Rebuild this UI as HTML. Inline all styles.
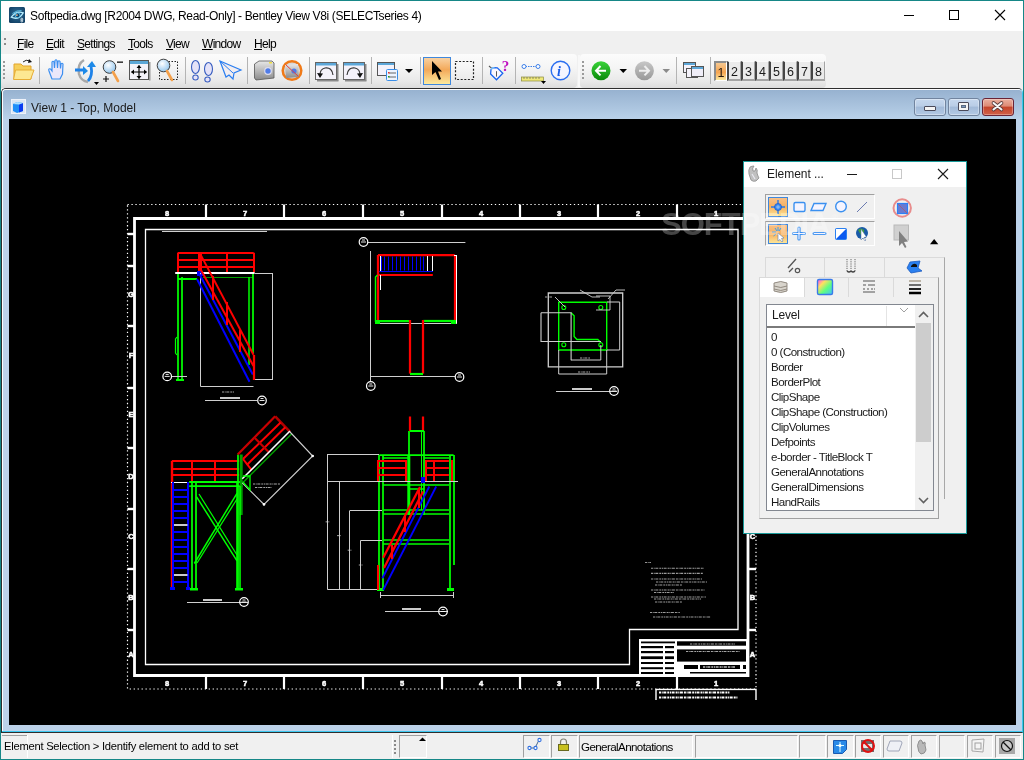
<!DOCTYPE html>
<html><head><meta charset="utf-8">
<style>
*{margin:0;padding:0;box-sizing:border-box}
html,body{width:1024px;height:760px;overflow:hidden;background:#f0f0f0;font-family:"Liberation Sans",sans-serif;position:relative}
.a{position:absolute}
#tb{left:0;top:0;width:1024px;height:31px;background:#fff;border-top:1px solid #168787;border-left:1px solid #168787;border-right:1px solid #168787}
#ttl{left:30px;top:9px;font-size:12px;letter-spacing:-0.36px;color:#000;white-space:nowrap}
#menu{left:1px;top:31px;width:1022px;height:23px;background:#f0f0f0}
.mi{position:absolute;top:37px;font-size:12px;letter-spacing:-0.7px;color:#000;white-space:nowrap}
.mi u{text-decoration:underline}
.band{position:absolute;top:54px;height:34px;border-radius:0 4px 4px 0;background:linear-gradient(#fcfcfc,#f5f5f5 40%,#e9e9e9 80%,#dcdcdc)}
.sep{position:absolute;top:57px;width:1px;height:27px;background:#c4c4c4;box-shadow:1px 0 0 #fff}
#mdi{left:1px;top:88px;width:1022px;height:645px;background:#bfd4ec;border:1px solid #2a2a2a;border-radius:5px 5px 0 0}
#mdititle{left:2px;top:89px;width:1020px;height:30px;background:linear-gradient(#99b3d2,#b3cbe6);border-radius:4px 4px 0 0;border-top:1px solid #fff;border-left:1px solid #fff}
#vp{left:9px;top:119px;width:1007px;height:606px;background:#000;overflow:hidden}
.sp{position:absolute;top:735px;height:23px;border-top:1px solid #a0a0a0;border-left:1px solid #a0a0a0;border-right:1px solid #fff;border-bottom:1px solid #fff}
#dlg{left:743px;top:161px;width:224px;height:373px;background:#f0f0f0;border:1px solid #1a8a8a}
</style></head><body>
<!-- window border -->
<div class="a" style="left:0;top:0;width:1px;height:760px;background:#168787"></div>
<div class="a" style="left:1023px;top:0;width:1px;height:760px;background:#168787"></div>
<div class="a" style="left:0;top:759px;width:1024px;height:1px;background:#168787"></div>
<div id="tb" class="a"></div>
<div id="ttl" class="a">Softpedia.dwg [R2004 DWG, Read-Only] - Bentley View V8i (SELECTseries 4)</div>

<div id="menu" class="a"></div>

<!-- title bar content -->
<svg class="a" style="left:9px;top:7px" width="16" height="16" viewBox="0 0 16 16">
<defs><radialGradient id="eyeg" cx="50%" cy="45%" r="65%"><stop offset="0" stop-color="#2f6f9a"/><stop offset="1" stop-color="#103e62"/></radialGradient></defs>
<rect x="0" y="0" width="16" height="16" rx="1.5" fill="url(#eyeg)"/>
<path d="M2.3 10.2 Q7.5 3.2 14.2 5.8 Q9.5 13.6 2.3 10.2Z" fill="#1a5580" stroke="#b6ecfc" stroke-width="1.3"/>
<path d="M3.5 6.5 Q8 3 12.5 3.6" fill="none" stroke="#60c8f0" stroke-width="0.9"/>
<circle cx="8.6" cy="8.3" r="2.4" fill="#0d3d66" stroke="#5cc4ec" stroke-width="0.9"/>
<circle cx="7.9" cy="8.1" r="0.9" fill="#f4c090"/>
<circle cx="12.8" cy="12.2" r="1" fill="none" stroke="#e8f4fa" stroke-width="0.8"/><circle cx="12.8" cy="14" r="1" fill="none" stroke="#e8f4fa" stroke-width="0.8"/>
</svg>
<svg class="a" style="left:890px;top:0" width="133" height="31">
<line x1="904" y1="15.5" x2="914" y2="15.5" stroke="#000" stroke-width="1" transform="translate(-890,0)"/>
<rect x="59.5" y="10.5" width="9" height="9" fill="none" stroke="#000" stroke-width="1"/>
<path d="M105 10 L115 20 M115 10 L105 20" stroke="#000" stroke-width="1.1"/>
</svg>

<!-- menu -->
<div class="a" style="left:4px;top:38px;width:2px;height:2px;background:#8a8a8a"></div>
<div class="a" style="left:4px;top:43px;width:2px;height:2px;background:#8a8a8a"></div>
<div class="mi" style="left:17px"><u>F</u>ile</div>
<div class="mi" style="left:46px"><u>E</u>dit</div>
<div class="mi" style="left:77px"><u>S</u>ettings</div>
<div class="mi" style="left:128px"><u>T</u>ools</div>
<div class="mi" style="left:166px"><u>V</u>iew</div>
<div class="mi" style="left:202px"><u>W</u>indow</div>
<div class="mi" style="left:254px"><u>H</u>elp</div>

<!-- toolbars -->
<div class="band" style="left:1px;width:576px"></div>
<div class="band" style="left:580px;width:246px;border-radius:4px"></div><div class="a" style="left:578px;top:55px;width:2px;height:32px;background:#f8f8f8"></div>
<svg class="a" style="left:0;top:54px" width="1024" height="34" viewBox="0 54 1024 34">
<defs>
<linearGradient id="selg" x1="0" y1="0" x2="0" y2="1"><stop offset="0" stop-color="#f9d3a4"/><stop offset="0.45" stop-color="#f3a95a"/><stop offset="1" stop-color="#fdeb9e"/></linearGradient>
<radialGradient id="mag" cx="40%" cy="35%" r="70%"><stop offset="0" stop-color="#ffffff"/><stop offset="1" stop-color="#8fc4ee"/></radialGradient>
<linearGradient id="grn" x1="0" y1="0" x2="0" y2="1"><stop offset="0" stop-color="#3ad43a"/><stop offset="1" stop-color="#0a8a0a"/></linearGradient>
<linearGradient id="gry" x1="0" y1="0" x2="0" y2="1"><stop offset="0" stop-color="#c8c8c8"/><stop offset="1" stop-color="#989898"/></linearGradient>
<linearGradient id="cam" x1="0" y1="0" x2="0" y2="1"><stop offset="0" stop-color="#e8e8e8"/><stop offset="1" stop-color="#8a8a8a"/></linearGradient>
</defs>
<!-- grip -->
<g fill="#9a9a9a"><rect x="3" y="61" width="2" height="2"/><rect x="3" y="65" width="2" height="2"/><rect x="3" y="69" width="2" height="2"/><rect x="3" y="73" width="2" height="2"/><rect x="3" y="77" width="2" height="2"/></g>
<!-- folder -->
<path d="M14 64 L21 64 L23 66 L31 66 L31 79 L14 79Z" fill="#f6cf5a" stroke="#e3a52a" stroke-width="1"/>
<path d="M15.5 70 L34 70 L30.5 79.5 L13.5 79.5Z" fill="#fde892" stroke="#e7ad35" stroke-width="1"/>
<path d="M23 62 Q26 59 30 61" fill="none" stroke="#222" stroke-width="1"/><path d="M29 59 L32 62 L28 63Z" fill="#111"/>
<!-- seps -->
<g fill="#b4b4b4"><rect x="39" y="57" width="1" height="27"/><rect x="185" y="57" width="1" height="27"/><rect x="247" y="57" width="1" height="27"/><rect x="309" y="57" width="1" height="27"/><rect x="371" y="57" width="1" height="27"/><rect x="420" y="57" width="1" height="27"/><rect x="482" y="57" width="1" height="27"/><rect x="515" y="57" width="1" height="27"/><rect x="676" y="57" width="1" height="27"/><rect x="710" y="57" width="1" height="27"/></g>
<!-- hand -->
<path d="M52 79 L49 71 Q48 68 50.5 69 L52 71 L52 62 Q53 60.5 54 62 L54.5 68 L55 60.5 Q56 59 57 60.5 L57.5 68 L58 61.5 Q59 60 60 61.5 L60.5 68.5 L61 64 Q62 62.5 63 64 L62.5 74 L60 79Z" fill="#ebe7fa" stroke="#3b8ff0" stroke-width="1.2"/>
<!-- rotate -->
<path d="M84 60 Q77 64 79 74 Q81 81 88 82" fill="none" stroke="#a8a8a8" stroke-width="2.5"/>
<path d="M91 66 Q93 76 88 81" fill="none" stroke="#1e82e8" stroke-width="2.8"/>
<path d="M87 67 L92 61 L96 67Z" fill="#1e8ae8"/>
<path d="M75 70 L84 70" stroke="#1e82e8" stroke-width="3"/><path d="M83 66 L88 71 L83 75Z" fill="#1e8ae8"/>
<path d="M94 82 L99 82 L96.5 85Z" fill="#000"/>
<!-- zoom in/out -->
<circle cx="109.5" cy="67" r="6.3" fill="url(#mag)" stroke="#404040" stroke-width="1"/>
<path d="M113 72 L118 81" stroke="#f4a04a" stroke-width="2.6" stroke-linecap="round"/>
<rect x="117" y="61.5" width="6" height="1.3" fill="#111"/>
<path d="M103 79 h6 M106 76 v6" stroke="#111" stroke-width="1.2"/>
<!-- fit -->
<rect x="129.5" y="60.5" width="19" height="19" fill="#f4f2fa" stroke="#555" stroke-width="1"/>
<rect x="130" y="61" width="18" height="3" fill="#5ca7d8"/>
<rect x="149" y="62" width="1.5" height="18.5" fill="#999"/>
<path d="M131.5 72 h15 M139 65.5 v13" stroke="#000" stroke-width="1.2"/>
<path d="M131 72 l3 -2.5 v5Z M147 72 l-3 -2.5 v5Z M139 65 l-2.5 3 h5Z M139 79 l-2.5 -3 h5Z" fill="#000"/>
<!-- zoom window -->
<rect x="159.5" y="61.5" width="18" height="18" fill="none" stroke="#222" stroke-width="1" stroke-dasharray="1.5 1.5"/>
<circle cx="163.5" cy="65.5" r="6.3" fill="url(#mag)" stroke="#404040" stroke-width="1"/>
<path d="M167 71 L172 80" stroke="#f4a04a" stroke-width="2.6" stroke-linecap="round"/>
<!-- footprints -->
<ellipse cx="195.5" cy="67" rx="4" ry="6.5" fill="#e4e2f8" stroke="#3a5fc0" stroke-width="1.1"/>
<ellipse cx="195.5" cy="77.5" rx="2.7" ry="2.5" fill="#e4e2f8" stroke="#3a5fc0" stroke-width="1.1"/>
<ellipse cx="208.5" cy="69" rx="4" ry="6.5" fill="#e4e2f8" stroke="#3a5fc0" stroke-width="1.1"/>
<ellipse cx="207.5" cy="79.5" rx="2.7" ry="2.5" fill="#e4e2f8" stroke="#3a5fc0" stroke-width="1.1"/>
<!-- plane -->
<path d="M220 61 L241 70 L234 73 L233 79 L229 75 L226 77Z" fill="#f3eef0" stroke="#2a7ef0" stroke-width="1.2"/>
<path d="M220 61 L233 73" stroke="#2a7ef0" stroke-width="1"/>
<!-- camera -->
<path d="M254.5 64 L259 61 L272 61 L274 63 L274 78 L256 80 L254.5 78Z" fill="url(#cam)" stroke="#555" stroke-width="0.8"/>
<circle cx="268" cy="71" r="3.3" fill="#4f7ce8" stroke="#dde" stroke-width="1.2"/>
<rect x="269" y="62" width="3" height="1.5" fill="#f0e040"/>
<!-- camera no -->
<circle cx="292" cy="70.5" r="9.3" fill="#d8d8d8" stroke="#f07a18" stroke-width="2.5"/>
<path d="M285 65 L298 64 L299 77 L286 78Z" fill="url(#cam)"/>
<circle cx="294" cy="71" r="2.6" fill="#4f7ce8"/>
<path d="M285.5 64.5 L298.5 76.5" stroke="#e04040" stroke-width="1"/>
<!-- view prev/next -->
<rect x="315.5" y="62.5" width="21" height="17" fill="#f4f2fa" stroke="#666" stroke-width="1"/>
<rect x="316" y="63" width="20" height="2.5" fill="#5ca7d8"/>
<rect x="337" y="64" width="1.5" height="16.5" fill="#8a8a8a"/><rect x="317" y="80" width="21.5" height="1.5" fill="#8a8a8a"/>
<path d="M333 75 Q332 67 325 68 Q320 69 320 75" fill="none" stroke="#333" stroke-width="1.1"/><path d="M317 73 L320 78 L323 73.5Z" fill="#111"/>
<rect x="343.5" y="62.5" width="21" height="17" fill="#f4f2fa" stroke="#666" stroke-width="1"/>
<rect x="344" y="63" width="20" height="2.5" fill="#5ca7d8"/>
<rect x="365" y="64" width="1.5" height="16.5" fill="#8a8a8a"/><rect x="345" y="80" width="21.5" height="1.5" fill="#8a8a8a"/>
<path d="M347 75 Q348 67 355 68 Q360 69 360 75" fill="none" stroke="#333" stroke-width="1.1"/><path d="M357 73.5 L360 78 L363 73Z" fill="#111"/>
<!-- view settings -->
<rect x="377.5" y="62.5" width="17" height="13" fill="#f4f2fa" stroke="#555" stroke-width="1"/>
<rect x="378" y="63" width="16" height="2" fill="#5ca7d8"/>
<rect x="386.5" y="69.5" width="11" height="11" rx="1" fill="#eef4ff" stroke="#3a8ee8" stroke-width="1"/>
<path d="M389 73 h7 M389 77 h7" stroke="#666" stroke-width="1"/>
<rect x="388" y="72" width="1.5" height="1.5" fill="#e03030"/><rect x="388" y="76" width="1.5" height="1.5" fill="#20a020"/>
<path d="M405 69 L413 69 L409 73Z" fill="#000"/>
<!-- selected arrow -->
<rect x="423.5" y="57.5" width="27" height="27" fill="url(#selg)" stroke="#3f87dc" stroke-width="1"/>
<path d="M432 61 L432 75 L435.5 72 L439 80 L441 79 L438 71.5 L442 71.5Z" fill="#000"/>
<!-- dashed rect -->
<rect x="455.5" y="61.5" width="18" height="18" fill="none" stroke="#222" stroke-width="1.2" stroke-dasharray="2 1.6"/>
<!-- tag ? -->
<path d="M489 66 L491.8 68.3" stroke="#555" stroke-width="1.1"/>
<path d="M491 69.5 Q492 67.6 494.5 67.6 L497.3 67.8 L502.8 73.3 L496.5 79.8 L490.6 74 Z" fill="#fdf8ff" stroke="#1a64f0" stroke-width="1.3"/>
<path d="M491 69.5 Q492 67.6 494.5 67.6" fill="none" stroke="#80c8f8" stroke-width="1.4"/>
<path d="M496.5 71.2 v5.4" stroke="#444" stroke-width="0.9"/>
<text x="501.8" y="71.3" font-size="15" font-weight="bold" fill="#c010c0" font-family="Liberation Serif">?</text>
<!-- measure -->
<path d="M523 66.5 h14" stroke="#3b7ee8" stroke-width="1" stroke-dasharray="1.5 1"/>
<circle cx="524" cy="66.5" r="2" fill="#fff" stroke="#3b7ee8" stroke-width="1"/><circle cx="538" cy="66.5" r="2" fill="#fff" stroke="#3b7ee8" stroke-width="1"/>
<rect x="521.5" y="77" width="22" height="4" fill="#efe878" stroke="#8a8a40" stroke-width="0.7"/>
<path d="M524 77v2 M527 77v2 M530 77v2 M533 77v2 M536 77v2 M539 77v2" stroke="#555" stroke-width="0.6"/>
<path d="M541 81 L546 81 L543.5 84Z" fill="#000"/>
<!-- info -->
<circle cx="560.5" cy="70.5" r="9.3" fill="#f5f5ff" stroke="#2a6ef0" stroke-width="1.4"/>
<text x="557" y="76" font-size="14" font-style="italic" font-weight="bold" fill="#1a5ee8" font-family="Liberation Serif">i</text>
<!-- toolbar2 grip -->
<g fill="#9a9a9a"><rect x="582" y="61" width="2" height="2"/><rect x="582" y="65" width="2" height="2"/><rect x="582" y="69" width="2" height="2"/><rect x="582" y="73" width="2" height="2"/><rect x="582" y="77" width="2" height="2"/></g>
<!-- back/forward -->
<circle cx="601" cy="70.7" r="9.5" fill="url(#grn)"/>
<path d="M596 70.7 h10 M600.5 66 l-4.5 4.7 4.5 4.7" fill="none" stroke="#fff" stroke-width="2"/>
<path d="M619.5 69 h7.5 l-3.75 4Z" fill="#000"/>
<circle cx="644.4" cy="70.7" r="9.5" fill="url(#gry)"/>
<path d="M649 70.7 h-10 M644.5 66 l4.5 4.7 -4.5 4.7" fill="none" stroke="#eee" stroke-width="2"/>
<path d="M662.5 69 h7.5 l-3.75 4Z" fill="#8a8a8a"/>
<!-- windows icon -->
<rect x="683.5" y="62.5" width="12" height="10" fill="#f4f2fa" stroke="#555" stroke-width="1"/><rect x="684" y="63" width="11" height="2" fill="#5ca7d8"/>
<rect x="686.5" y="68.5" width="11" height="9" fill="#f4f2fa" stroke="#555" stroke-width="1"/>
<rect x="691.5" y="66.5" width="12" height="10" fill="#f0eef8" stroke="#555" stroke-width="1"/><rect x="692" y="67" width="11" height="2" fill="#5ca7d8"/>
</svg>
<!-- view buttons -->
<div class="a" style="left:713px;top:61px;width:114px;height:20px"><div class="a" style="left:1px;top:0;width:13px;height:20px;border-left:2px solid #8c8c8c;border-top:2px solid #8c8c8c;border-right:1px solid #fff;border-bottom:1px solid #fff;background:linear-gradient(#f6c890,#f7a550 55%,#fdeaa0);font-size:12.5px;line-height:19px;text-align:center;color:#2a1a10;padding-top:1px">1</div><div class="a" style="left:14px;top:0;width:14px;height:20px;border-left:2px solid #454545;border-top:1px solid #fbfbfb;border-right:1px solid #a4a4a4;border-bottom:2px solid #a4a4a4;background:#ebebeb;font-size:12.5px;line-height:19px;text-align:center;color:#1a1a1a;padding-top:1px">2</div><div class="a" style="left:28px;top:0;width:14px;height:20px;border-left:2px solid #454545;border-top:1px solid #fbfbfb;border-right:1px solid #a4a4a4;border-bottom:2px solid #a4a4a4;background:#ebebeb;font-size:12.5px;line-height:19px;text-align:center;color:#1a1a1a;padding-top:1px">3</div><div class="a" style="left:42px;top:0;width:14px;height:20px;border-left:2px solid #454545;border-top:1px solid #fbfbfb;border-right:1px solid #a4a4a4;border-bottom:2px solid #a4a4a4;background:#ebebeb;font-size:12.5px;line-height:19px;text-align:center;color:#1a1a1a;padding-top:1px">4</div><div class="a" style="left:56px;top:0;width:14px;height:20px;border-left:2px solid #454545;border-top:1px solid #fbfbfb;border-right:1px solid #a4a4a4;border-bottom:2px solid #a4a4a4;background:#ebebeb;font-size:12.5px;line-height:19px;text-align:center;color:#1a1a1a;padding-top:1px">5</div><div class="a" style="left:70px;top:0;width:14px;height:20px;border-left:2px solid #454545;border-top:1px solid #fbfbfb;border-right:1px solid #a4a4a4;border-bottom:2px solid #a4a4a4;background:#ebebeb;font-size:12.5px;line-height:19px;text-align:center;color:#1a1a1a;padding-top:1px">6</div><div class="a" style="left:84px;top:0;width:14px;height:20px;border-left:2px solid #454545;border-top:1px solid #fbfbfb;border-right:1px solid #a4a4a4;border-bottom:2px solid #a4a4a4;background:#ebebeb;font-size:12.5px;line-height:19px;text-align:center;color:#1a1a1a;padding-top:1px">7</div><div class="a" style="left:98px;top:0;width:14px;height:20px;border-left:2px solid #454545;border-top:1px solid #fbfbfb;border-right:1px solid #a4a4a4;border-bottom:2px solid #a4a4a4;background:#ebebeb;font-size:12.5px;line-height:19px;text-align:center;color:#1a1a1a;padding-top:1px">8</div></div>
<div class="a" style="left:1px;top:88px;width:1022px;height:645px;background:#bcd2ea;border-radius:5px 5px 0 0;border-top:1px solid #2e2e2e;border-left:1px solid #2e2e2e;border-right:1px solid #3cc8f0;border-bottom:1px solid #2e2e2e"></div>
<div class="a" style="left:2px;top:731px;width:1021px;height:1px;background:#3cc8f0"></div>
<div class="a" style="left:2px;top:89px;width:1020px;height:642px;border-radius:4px 4px 0 0;border-top:1px solid #fdfdff;border-left:1px solid #fdfdff"></div>
<div class="a" style="left:3px;top:90px;width:1019px;height:29px;border-radius:3px 3px 0 0;background:linear-gradient(#97b2d0,#b9d1e9)"></div>
<svg class="a" style="left:11px;top:99px" width="16" height="16" viewBox="0 0 16 16">
<rect x="0.5" y="0.5" width="14" height="14" fill="#dce6f2" stroke="#eef2fa" stroke-width="1"/>
<path d="M2 5 L6 3 L12 4 L12 12 L6 14 L2 12Z" fill="#1f8ff8"/>
<path d="M8 5.5 L12 4 L12 12 L8 13.5Z" fill="#0a3cf0"/>
<path d="M2 5 L6 3 L12 4 L8 5.5Z" fill="#aee0ff"/>
</svg>
<div class="a" style="left:31px;top:101px;font-size:12px;color:#1a1a1a;white-space:nowrap">View 1 - Top, Model</div>
<!-- MDI buttons -->
<div class="a" style="left:914px;top:98px;width:32px;height:18px;border:1px solid #71849f;border-radius:3px;background:linear-gradient(#c6d8ee 0,#b9cde6 45%,#a2bad8 50%,#b3c9e4 100%);box-shadow:inset 0 0 0 1px rgba(255,255,255,.35)"></div>
<div class="a" style="left:924px;top:106px;width:12px;height:5px;border:1px solid #4a4a5a;border-radius:1px;background:#f4f4f4"></div>
<div class="a" style="left:948px;top:98px;width:32px;height:18px;border:1px solid #71849f;border-radius:3px;background:linear-gradient(#c6d8ee 0,#b9cde6 45%,#a2bad8 50%,#b3c9e4 100%);box-shadow:inset 0 0 0 1px rgba(255,255,255,.35)"></div>
<div class="a" style="left:958px;top:102px;width:11px;height:9px;border:1px solid #4a4a5a;border-radius:1px;background:#f4f4f4"><div style="position:absolute;left:2px;top:2px;width:5px;height:3px;background:#7a98c0;border:1px solid #5a6a80"></div></div>
<div class="a" style="left:982px;top:98px;width:32px;height:18px;border:1px solid #6a2436;border-radius:3px;background:linear-gradient(#eab0a0 0,#de8a74 45%,#c5442a 50%,#d06048 100%);box-shadow:inset 0 0 0 1px rgba(255,255,255,.3)"></div>
<svg class="a" style="left:990px;top:100px" width="16" height="13"><path d="M3.5 3 L11.5 9.5 M11.5 3 L3.5 9.5" stroke="#5a3a3a" stroke-width="3.6" stroke-linecap="round"/><path d="M3.5 3 L11.5 9.5 M11.5 3 L3.5 9.5" stroke="#f8f8f8" stroke-width="2" stroke-linecap="round"/></svg>
<div id="vp" class="a"></div>
<!--DRAW--><svg class="a" style="left:9px;top:119px" width="1007" height="606" viewBox="9 119 1007 606" shape-rendering="auto"><rect x="127.5" y="204.5" width="628.5" height="484.5" fill="none" stroke="#ffffff" stroke-width="1.2" stroke-dasharray="1.3 2.65"/>
<path d="M134.5 675.5 V218.5 H748 V675.5 Z" stroke="#ffffff" stroke-width="2.8" fill="none" />
<path d="M145.5 229.5 H738 V629.5 H629.5 V664.5 H145.5 Z" stroke="#ffffff" stroke-width="1.3" fill="none" />
<line x1="206" y1="204.5" x2="206" y2="218" stroke="#ffffff" stroke-width="2.2" />
<line x1="206" y1="676" x2="206" y2="689" stroke="#ffffff" stroke-width="2.2" />
<line x1="284" y1="204.5" x2="284" y2="218" stroke="#ffffff" stroke-width="2.2" />
<line x1="284" y1="676" x2="284" y2="689" stroke="#ffffff" stroke-width="2.2" />
<line x1="363" y1="204.5" x2="363" y2="218" stroke="#ffffff" stroke-width="2.2" />
<line x1="363" y1="676" x2="363" y2="689" stroke="#ffffff" stroke-width="2.2" />
<line x1="442" y1="204.5" x2="442" y2="218" stroke="#ffffff" stroke-width="2.2" />
<line x1="442" y1="676" x2="442" y2="689" stroke="#ffffff" stroke-width="2.2" />
<line x1="520" y1="204.5" x2="520" y2="218" stroke="#ffffff" stroke-width="2.2" />
<line x1="520" y1="676" x2="520" y2="689" stroke="#ffffff" stroke-width="2.2" />
<line x1="598" y1="204.5" x2="598" y2="218" stroke="#ffffff" stroke-width="2.2" />
<line x1="598" y1="676" x2="598" y2="689" stroke="#ffffff" stroke-width="2.2" />
<line x1="677" y1="204.5" x2="677" y2="218" stroke="#ffffff" stroke-width="2.2" />
<line x1="677" y1="676" x2="677" y2="689" stroke="#ffffff" stroke-width="2.2" />
<text x="167" y="215.5" font-family="Liberation Sans" font-weight="bold" font-size="7.5" fill="#fff" stroke="#fff" stroke-width="0.5" text-anchor="middle">8</text>
<text x="167" y="686" font-family="Liberation Sans" font-weight="bold" font-size="7.5" fill="#fff" stroke="#fff" stroke-width="0.5" text-anchor="middle">8</text>
<text x="245" y="215.5" font-family="Liberation Sans" font-weight="bold" font-size="7.5" fill="#fff" stroke="#fff" stroke-width="0.5" text-anchor="middle">7</text>
<text x="245" y="686" font-family="Liberation Sans" font-weight="bold" font-size="7.5" fill="#fff" stroke="#fff" stroke-width="0.5" text-anchor="middle">7</text>
<text x="324" y="215.5" font-family="Liberation Sans" font-weight="bold" font-size="7.5" fill="#fff" stroke="#fff" stroke-width="0.5" text-anchor="middle">6</text>
<text x="324" y="686" font-family="Liberation Sans" font-weight="bold" font-size="7.5" fill="#fff" stroke="#fff" stroke-width="0.5" text-anchor="middle">6</text>
<text x="402" y="215.5" font-family="Liberation Sans" font-weight="bold" font-size="7.5" fill="#fff" stroke="#fff" stroke-width="0.5" text-anchor="middle">5</text>
<text x="402" y="686" font-family="Liberation Sans" font-weight="bold" font-size="7.5" fill="#fff" stroke="#fff" stroke-width="0.5" text-anchor="middle">5</text>
<text x="481" y="215.5" font-family="Liberation Sans" font-weight="bold" font-size="7.5" fill="#fff" stroke="#fff" stroke-width="0.5" text-anchor="middle">4</text>
<text x="481" y="686" font-family="Liberation Sans" font-weight="bold" font-size="7.5" fill="#fff" stroke="#fff" stroke-width="0.5" text-anchor="middle">4</text>
<text x="559" y="215.5" font-family="Liberation Sans" font-weight="bold" font-size="7.5" fill="#fff" stroke="#fff" stroke-width="0.5" text-anchor="middle">3</text>
<text x="559" y="686" font-family="Liberation Sans" font-weight="bold" font-size="7.5" fill="#fff" stroke="#fff" stroke-width="0.5" text-anchor="middle">3</text>
<text x="638" y="215.5" font-family="Liberation Sans" font-weight="bold" font-size="7.5" fill="#fff" stroke="#fff" stroke-width="0.5" text-anchor="middle">2</text>
<text x="638" y="686" font-family="Liberation Sans" font-weight="bold" font-size="7.5" fill="#fff" stroke="#fff" stroke-width="0.5" text-anchor="middle">2</text>
<text x="716" y="215.5" font-family="Liberation Sans" font-weight="bold" font-size="7.5" fill="#fff" stroke="#fff" stroke-width="0.5" text-anchor="middle">1</text>
<text x="716" y="686" font-family="Liberation Sans" font-weight="bold" font-size="7.5" fill="#fff" stroke="#fff" stroke-width="0.5" text-anchor="middle">1</text>
<line x1="127.5" y1="234" x2="134" y2="234" stroke="#ffffff" stroke-width="2.4" />
<line x1="748" y1="234" x2="756" y2="234" stroke="#ffffff" stroke-width="2.4" />
<line x1="127.5" y1="266" x2="134" y2="266" stroke="#ffffff" stroke-width="2.4" />
<line x1="748" y1="266" x2="756" y2="266" stroke="#ffffff" stroke-width="2.4" />
<line x1="127.5" y1="326" x2="134" y2="326" stroke="#ffffff" stroke-width="2.4" />
<line x1="748" y1="326" x2="756" y2="326" stroke="#ffffff" stroke-width="2.4" />
<line x1="127.5" y1="388" x2="134" y2="388" stroke="#ffffff" stroke-width="2.4" />
<line x1="748" y1="388" x2="756" y2="388" stroke="#ffffff" stroke-width="2.4" />
<line x1="127.5" y1="448" x2="134" y2="448" stroke="#ffffff" stroke-width="2.4" />
<line x1="748" y1="448" x2="756" y2="448" stroke="#ffffff" stroke-width="2.4" />
<line x1="127.5" y1="509" x2="134" y2="509" stroke="#ffffff" stroke-width="2.4" />
<line x1="748" y1="509" x2="756" y2="509" stroke="#ffffff" stroke-width="2.4" />
<line x1="127.5" y1="569" x2="134" y2="569" stroke="#ffffff" stroke-width="2.4" />
<line x1="748" y1="569" x2="756" y2="569" stroke="#ffffff" stroke-width="2.4" />
<line x1="127.5" y1="630" x2="134" y2="630" stroke="#ffffff" stroke-width="2.4" />
<line x1="748" y1="630" x2="756" y2="630" stroke="#ffffff" stroke-width="2.4" />
<text x="131" y="296.5" font-family="Liberation Sans" font-weight="bold" font-size="7.5" fill="#fff" stroke="#fff" stroke-width="0.5" text-anchor="middle">G</text>
<text x="752.5" y="296.5" font-family="Liberation Sans" font-weight="bold" font-size="7.5" fill="#fff" stroke="#fff" stroke-width="0.5" text-anchor="middle">G</text>
<text x="131" y="357.5" font-family="Liberation Sans" font-weight="bold" font-size="7.5" fill="#fff" stroke="#fff" stroke-width="0.5" text-anchor="middle">F</text>
<text x="752.5" y="357.5" font-family="Liberation Sans" font-weight="bold" font-size="7.5" fill="#fff" stroke="#fff" stroke-width="0.5" text-anchor="middle">F</text>
<text x="131" y="416.5" font-family="Liberation Sans" font-weight="bold" font-size="7.5" fill="#fff" stroke="#fff" stroke-width="0.5" text-anchor="middle">E</text>
<text x="752.5" y="416.5" font-family="Liberation Sans" font-weight="bold" font-size="7.5" fill="#fff" stroke="#fff" stroke-width="0.5" text-anchor="middle">E</text>
<text x="131" y="478.5" font-family="Liberation Sans" font-weight="bold" font-size="7.5" fill="#fff" stroke="#fff" stroke-width="0.5" text-anchor="middle">D</text>
<text x="752.5" y="478.5" font-family="Liberation Sans" font-weight="bold" font-size="7.5" fill="#fff" stroke="#fff" stroke-width="0.5" text-anchor="middle">D</text>
<text x="131" y="538.5" font-family="Liberation Sans" font-weight="bold" font-size="7.5" fill="#fff" stroke="#fff" stroke-width="0.5" text-anchor="middle">C</text>
<text x="752.5" y="538.5" font-family="Liberation Sans" font-weight="bold" font-size="7.5" fill="#fff" stroke="#fff" stroke-width="0.5" text-anchor="middle">C</text>
<text x="131" y="599.5" font-family="Liberation Sans" font-weight="bold" font-size="7.5" fill="#fff" stroke="#fff" stroke-width="0.5" text-anchor="middle">B</text>
<text x="752.5" y="599.5" font-family="Liberation Sans" font-weight="bold" font-size="7.5" fill="#fff" stroke="#fff" stroke-width="0.5" text-anchor="middle">B</text>
<text x="131" y="656.5" font-family="Liberation Sans" font-weight="bold" font-size="7.5" fill="#fff" stroke="#fff" stroke-width="0.5" text-anchor="middle">A</text>
<text x="752.5" y="656.5" font-family="Liberation Sans" font-weight="bold" font-size="7.5" fill="#fff" stroke="#fff" stroke-width="0.5" text-anchor="middle">A</text>
<line x1="162" y1="231.5" x2="267" y2="231.5" stroke="#cfcfcf" stroke-width="1" />
<line x1="177.8" y1="253" x2="253.7" y2="253" stroke="#ff0000" stroke-width="2.0" />
<line x1="177.8" y1="260" x2="253.7" y2="260" stroke="#ff0000" stroke-width="2.0" />
<line x1="177.8" y1="267" x2="253.7" y2="267" stroke="#ff0000" stroke-width="2.0" />
<line x1="178" y1="252.7" x2="178" y2="272.5" stroke="#ff0000" stroke-width="2.0" />
<line x1="199" y1="252.7" x2="199" y2="272.5" stroke="#ff0000" stroke-width="2.0" />
<line x1="201" y1="252.7" x2="201" y2="272.5" stroke="#ff0000" stroke-width="2.0" />
<line x1="227" y1="252.7" x2="227" y2="272.5" stroke="#ff0000" stroke-width="2.0" />
<line x1="254" y1="252.7" x2="254" y2="272.5" stroke="#ff0000" stroke-width="2.0" />
<line x1="175.2" y1="273" x2="254.6" y2="273" stroke="#ffffff" stroke-width="2" />
<rect x="197" y="271" width="6" height="5" fill="#0000ff"/>
<line x1="254.6" y1="273.5" x2="272.7" y2="273.5" stroke="#cfcfcf" stroke-width="1" />
<line x1="272.5" y1="273" x2="272.5" y2="380" stroke="#cfcfcf" stroke-width="1" />
<line x1="253" y1="379.5" x2="272.7" y2="379.5" stroke="#cfcfcf" stroke-width="1" />
<line x1="178" y1="279" x2="197" y2="279" stroke="#00ff00" stroke-width="2.0" />
<line x1="203" y1="277.5" x2="253" y2="277.5" stroke="#00a000" stroke-width="1" />
<line x1="178" y1="274" x2="178" y2="380" stroke="#00ff00" stroke-width="1.75" />
<line x1="182" y1="277" x2="182" y2="380" stroke="#00ff00" stroke-width="1.75" />
<line x1="249" y1="277" x2="249" y2="365" stroke="#00ff00" stroke-width="1.5" />
<line x1="253" y1="274" x2="253" y2="353" stroke="#00ff00" stroke-width="1.75" />
<line x1="176" y1="380" x2="184" y2="380" stroke="#00ff00" stroke-width="2.0" />
<path d="M177 337 L175.5 339 V353 L177 355" stroke="#00ff00" stroke-width="1.2" fill="none" />
<line x1="200.5" y1="273" x2="200.5" y2="386" stroke="#cfcfcf" stroke-width="1" />
<line x1="200.3" y1="386.5" x2="253.5" y2="386.5" stroke="#cfcfcf" stroke-width="1" />
<line x1="197" y1="279" x2="249.5" y2="381.7" stroke="#0000ff" stroke-width="2.0" />
<line x1="199.5" y1="274.3" x2="252.8" y2="374.5" stroke="#0000ff" stroke-width="2.0" />
<line x1="200.6" y1="254.6" x2="253.5" y2="354.7" stroke="#ff0000" stroke-width="2.0" />
<line x1="200.6" y1="269.2" x2="253.5" y2="366" stroke="#ff0000" stroke-width="2.0" />
<line x1="254" y1="355" x2="254" y2="380" stroke="#ff0000" stroke-width="2.25" />
<line x1="213" y1="276" x2="213" y2="300" stroke="#ff0000" stroke-width="2.0" />
<line x1="227" y1="302" x2="227" y2="325" stroke="#ff0000" stroke-width="2.0" />
<line x1="240" y1="330" x2="240" y2="352" stroke="#ff0000" stroke-width="2.0" />
<circle cx="167.2" cy="376.4" r="4.3" fill="none" stroke="#ffffff" stroke-width="1.2"/>
<path d="M164.7 376.4 h5 M165.7 374.4 h3" stroke="#ffffff" stroke-width="0.9"/>
<line x1="172" y1="376.5" x2="187" y2="376.5" stroke="#cfcfcf" stroke-width="1" />
<line x1="222" y1="392" x2="234" y2="392" stroke="#cfcfcf" stroke-width="1" stroke-dasharray="2 0.7 1 0.6 3 1" opacity="0.8"/>
<line x1="220" y1="398" x2="240" y2="398" stroke="#ffffff" stroke-width="1.6" />
<line x1="205" y1="400.5" x2="257" y2="400.5" stroke="#cfcfcf" stroke-width="1" />
<circle cx="262" cy="400.5" r="4.3" fill="none" stroke="#ffffff" stroke-width="1.2"/>
<path d="M259.5 400.5 h5 M260.5 398.5 h3" stroke="#ffffff" stroke-width="0.9"/>
<line x1="367.5" y1="242.5" x2="465.4" y2="242.5" stroke="#cfcfcf" stroke-width="1" />
<circle cx="363.5" cy="242" r="4.3" fill="none" stroke="#ffffff" stroke-width="1.2"/>
<path d="M361.0 242 h5 M362.0 240 h3" stroke="#ffffff" stroke-width="0.9"/>
<line x1="370.5" y1="251" x2="370.5" y2="381" stroke="#cfcfcf" stroke-width="1" />
<circle cx="370.8" cy="386" r="4.3" fill="none" stroke="#ffffff" stroke-width="1.2"/>
<path d="M368.3 386 h5 M369.3 384 h3" stroke="#ffffff" stroke-width="0.9"/>
<line x1="371" y1="376.5" x2="455" y2="376.5" stroke="#cfcfcf" stroke-width="1" />
<circle cx="459.5" cy="377" r="4.3" fill="none" stroke="#ffffff" stroke-width="1.2"/>
<path d="M457.0 377 h5 M458.0 375 h3" stroke="#ffffff" stroke-width="0.9"/>
<line x1="378" y1="255" x2="454.8" y2="255" stroke="#ff0000" stroke-width="2.25" />
<line x1="455" y1="255.3" x2="455" y2="323" stroke="#ff0000" stroke-width="2.25" />
<line x1="456.5" y1="255" x2="456.5" y2="323" stroke="#ffffff" stroke-width="1" />
<line x1="457" y1="255.5" x2="454" y2="255.5" stroke="#ffffff" stroke-width="1" />
<line x1="381.5" y1="256.5" x2="381.5" y2="270.5" stroke="#0000ff" stroke-width="1" />
<line x1="384.5" y1="256.5" x2="384.5" y2="270.5" stroke="#0000ff" stroke-width="1" />
<line x1="388.5" y1="256.5" x2="388.5" y2="270.5" stroke="#0000ff" stroke-width="1" />
<line x1="392.5" y1="256.5" x2="392.5" y2="270.5" stroke="#0000ff" stroke-width="1" />
<line x1="396.5" y1="256.5" x2="396.5" y2="270.5" stroke="#0000ff" stroke-width="1" />
<line x1="400.5" y1="256.5" x2="400.5" y2="270.5" stroke="#0000ff" stroke-width="1" />
<line x1="404.5" y1="256.5" x2="404.5" y2="270.5" stroke="#0000ff" stroke-width="1" />
<line x1="408.5" y1="256.5" x2="408.5" y2="270.5" stroke="#0000ff" stroke-width="1" />
<line x1="412.5" y1="256.5" x2="412.5" y2="270.5" stroke="#0000ff" stroke-width="1" />
<line x1="416.5" y1="256.5" x2="416.5" y2="270.5" stroke="#0000ff" stroke-width="1" />
<line x1="420.5" y1="256.5" x2="420.5" y2="270.5" stroke="#0000ff" stroke-width="1" />
<line x1="423.5" y1="256.5" x2="423.5" y2="270.5" stroke="#0000ff" stroke-width="1" />
<line x1="380.5" y1="256" x2="380.5" y2="271" stroke="#ffffff" stroke-width="1" />
<line x1="427.5" y1="256" x2="427.5" y2="271" stroke="#ffffff" stroke-width="1" />
<line x1="432.5" y1="256" x2="432.5" y2="271" stroke="#ffffff" stroke-width="1" />
<line x1="378" y1="271.5" x2="433" y2="271.5" stroke="#ffffff" stroke-width="1" />
<line x1="378" y1="271.5" x2="433" y2="271.5" stroke="#0000ff" stroke-width="1" />
<line x1="378" y1="275" x2="432.8" y2="275" stroke="#ff0000" stroke-width="2.0" />
<line x1="378" y1="255" x2="378" y2="322" stroke="#ff0000" stroke-width="2.25" />
<line x1="380.5" y1="275" x2="380.5" y2="290" stroke="#ffffff" stroke-width="1" />
<path d="M377.5 275 L375.5 277 V322" stroke="#00ff00" stroke-width="1.4" fill="none" />
<line x1="376" y1="321" x2="409.8" y2="321" stroke="#00ff00" stroke-width="2.25" />
<line x1="423.3" y1="321" x2="455" y2="321" stroke="#00ff00" stroke-width="2.25" />
<line x1="376" y1="323.5" x2="457" y2="323.5" stroke="#cfcfcf" stroke-width="1" />
<rect x="375" y="320" width="5" height="4" fill="#00ff00"/>
<rect x="451" y="320" width="5" height="4" fill="#00ff00"/>
<line x1="410" y1="320" x2="410" y2="373.6" stroke="#ff0000" stroke-width="2.25" />
<line x1="423" y1="320" x2="423" y2="373.6" stroke="#ff0000" stroke-width="2.25" />
<line x1="410" y1="374" x2="423" y2="374" stroke="#00ff00" stroke-width="2.2" />
<path d="M548.3 293 H622.7 V366.8 H548.3 Z" stroke="#cfcfcf" stroke-width="1.3" fill="none" />
<path d="M558.7 302.2 H606.7 V350 H558.7 Z" stroke="#00ff00" stroke-width="1.4" fill="none" />
<path d="M571.1 312.8 L574.1 315.8 V336.5 L577 339.5 H597.8 L601.4 343" stroke="#00ff00" stroke-width="1.4" fill="none" />
<line x1="541" y1="341.5" x2="601" y2="341.5" stroke="#cfcfcf" stroke-width="1" />
<path d="M541 312.8 H571.1 V360.2 M541 312.8 V341.9" stroke="#cfcfcf" stroke-width="1.1" fill="none" />
<circle cx="563.8" cy="307.5" r="2" fill="none" stroke="#00ff00" stroke-width="1.1"/>
<circle cx="600.8" cy="307.5" r="2" fill="none" stroke="#00ff00" stroke-width="1.1"/>
<circle cx="563.8" cy="344.8" r="2" fill="none" stroke="#00ff00" stroke-width="1.1"/>
<circle cx="600.8" cy="344.8" r="2" fill="none" stroke="#00ff00" stroke-width="1.1"/>
<path d="M600.8 345 V360 H571" stroke="#cfcfcf" stroke-width="1" fill="none" />
<path d="M558.7 350 V374 H606.7 V350" stroke="#cfcfcf" stroke-width="1" fill="none" />
<path d="M607 350 H619.7 V302 H607" stroke="#cfcfcf" stroke-width="1" fill="none" />
<path d="M555 297 L565 307 M580 290 L592 297 L600 297 M608 299 L616 290 L625 290" stroke="#cfcfcf" stroke-width="0.9" fill="none" />
<path d="M596 296 H610 V310 H596" stroke="#cfcfcf" stroke-width="0.9" fill="none" />
<line x1="545" y1="297" x2="552" y2="297" stroke="#cfcfcf" stroke-width="1" stroke-dasharray="2 0.7 1 0.6 3 1" opacity="0.8"/>
<line x1="580" y1="358" x2="590" y2="358" stroke="#cfcfcf" stroke-width="1" stroke-dasharray="2 0.7 1 0.6 3 1" opacity="0.8"/>
<line x1="578" y1="372" x2="590" y2="372" stroke="#cfcfcf" stroke-width="1" stroke-dasharray="2 0.7 1 0.6 3 1" opacity="0.8"/>
<line x1="572" y1="389" x2="592" y2="389" stroke="#ffffff" stroke-width="1.6" />
<line x1="556" y1="391.5" x2="617" y2="391.5" stroke="#cfcfcf" stroke-width="1" />
<circle cx="614" cy="391" r="4.3" fill="none" stroke="#ffffff" stroke-width="1.2"/>
<path d="M611.5 391 h5 M612.5 389 h3" stroke="#ffffff" stroke-width="0.9"/>
<line x1="172" y1="461" x2="239.2" y2="461" stroke="#ff0000" stroke-width="2.0" />
<line x1="172" y1="469" x2="239.2" y2="469" stroke="#ff0000" stroke-width="2.0" />
<line x1="172" y1="475" x2="239.2" y2="475" stroke="#ff0000" stroke-width="2.0" />
<line x1="192" y1="460.8" x2="192" y2="481" stroke="#ff0000" stroke-width="2.0" />
<line x1="215" y1="460.8" x2="215" y2="481" stroke="#ff0000" stroke-width="2.0" />
<line x1="172" y1="460.8" x2="172" y2="590" stroke="#ff0000" stroke-width="2.4" />
<line x1="171" y1="482.5" x2="188" y2="482.5" stroke="#ffffff" stroke-width="1" />
<line x1="189.2" y1="482" x2="242.3" y2="482" stroke="#00ff00" stroke-width="2.0" />
<line x1="189.2" y1="486" x2="242.3" y2="486" stroke="#00ff00" stroke-width="1.75" />
<line x1="238" y1="454.5" x2="238" y2="589" stroke="#00ff00" stroke-width="1.75" />
<line x1="241.2" y1="454.5" x2="241.2" y2="515" stroke="#00a000" stroke-width="3" />
<line x1="240" y1="486" x2="240" y2="589" stroke="#00ff00" stroke-width="1.625" />
<line x1="192" y1="482" x2="192" y2="589" stroke="#00ff00" stroke-width="1.75" />
<line x1="196" y1="482" x2="196" y2="589" stroke="#00ff00" stroke-width="1.75" />
<line x1="237" y1="482" x2="237" y2="589" stroke="#00ff00" stroke-width="1.625" />
<rect x="190" y="588" width="8" height="2.5" fill="#00ff00"/>
<rect x="235" y="588" width="8" height="2.5" fill="#00ff00"/>
<line x1="196.6" y1="496.9" x2="237" y2="560.8" stroke="#00ff00" stroke-width="1.5" />
<line x1="199" y1="494" x2="237" y2="555" stroke="#00ff00" stroke-width="1.25" />
<line x1="237" y1="493.3" x2="194.3" y2="563.5" stroke="#00ff00" stroke-width="1.5" />
<line x1="237" y1="499" x2="197" y2="563" stroke="#00ff00" stroke-width="1.25" />
<line x1="173" y1="482" x2="173" y2="590" stroke="#0000ff" stroke-width="2.0" />
<line x1="188" y1="482" x2="188" y2="590" stroke="#0000ff" stroke-width="2" />
<line x1="174" y1="490" x2="187.5" y2="490" stroke="#0000ff" stroke-width="2.0" />
<line x1="174" y1="497" x2="187.5" y2="497" stroke="#0000ff" stroke-width="2.0" />
<line x1="174" y1="504" x2="187.5" y2="504" stroke="#0000ff" stroke-width="2.0" />
<line x1="174" y1="511" x2="187.5" y2="511" stroke="#0000ff" stroke-width="2.0" />
<line x1="174" y1="518" x2="187.5" y2="518" stroke="#0000ff" stroke-width="2.0" />
<line x1="174" y1="525" x2="187.5" y2="525" stroke="#ffffff" stroke-width="1.6" />
<line x1="174" y1="532" x2="187.5" y2="532" stroke="#0000ff" stroke-width="2.0" />
<line x1="174" y1="540" x2="187.5" y2="540" stroke="#0000ff" stroke-width="2.0" />
<line x1="174" y1="547" x2="187.5" y2="547" stroke="#0000ff" stroke-width="2.0" />
<line x1="174" y1="554" x2="187.5" y2="554" stroke="#0000ff" stroke-width="2.0" />
<line x1="174" y1="561" x2="187.5" y2="561" stroke="#0000ff" stroke-width="2.0" />
<line x1="174" y1="568" x2="187.5" y2="568" stroke="#0000ff" stroke-width="2.0" />
<line x1="174" y1="575" x2="187.5" y2="575" stroke="#ffffff" stroke-width="1.6" />
<line x1="174" y1="582" x2="187.5" y2="582" stroke="#0000ff" stroke-width="2.0" />
<rect x="170" y="587" width="5" height="3" fill="#0000ff"/>
<rect x="186" y="587" width="4" height="3" fill="#0000ff"/>
<line x1="237.7" y1="454.5" x2="275.2" y2="416.3" stroke="#c80000" stroke-width="2.2" />
<line x1="275.2" y1="416.3" x2="290" y2="431.9" stroke="#b00000" stroke-width="2.6" />
<line x1="243" y1="459" x2="280.6" y2="422.5" stroke="#ff0000" stroke-width="2.0" />
<line x1="247" y1="464.7" x2="285.3" y2="427.2" stroke="#ff0000" stroke-width="2.0" />
<line x1="243" y1="459" x2="251.7" y2="470.2" stroke="#ff0000" stroke-width="2.0" />
<line x1="254.8" y1="438" x2="268.9" y2="452.2" stroke="#c00000" stroke-width="2.2" />
<line x1="242.3" y1="478.8" x2="290" y2="431" stroke="#ffffff" stroke-width="1.6" />
<line x1="243.5" y1="482" x2="292" y2="433.5" stroke="#00a000" stroke-width="1.5" />
<path d="M290 432 L312.7 456 L264 504.4 L242.3 482.9" stroke="#cfcfcf" stroke-width="1.1" fill="none" />
<circle cx="312.7" cy="456" r="1.3" fill="#fff"/><circle cx="264" cy="504.4" r="1.3" fill="#fff"/>
<path d="M243 476 L250 476 L250 490 L243 482" stroke="#00ff00" stroke-width="1.3" fill="none" />
<line x1="253" y1="484" x2="280" y2="484" stroke="#cfcfcf" stroke-width="1" stroke-dasharray="2 0.7 1 0.6 3 1" opacity="0.8"/>
<line x1="255" y1="487.5" x2="272" y2="487.5" stroke="#cfcfcf" stroke-width="1" stroke-dasharray="2 0.7 1 0.6 3 1" opacity="0.8"/>
<line x1="203" y1="600" x2="222" y2="600" stroke="#ffffff" stroke-width="1.6" />
<line x1="187" y1="602.5" x2="248" y2="602.5" stroke="#cfcfcf" stroke-width="1" />
<circle cx="244" cy="602" r="4.3" fill="none" stroke="#ffffff" stroke-width="1.2"/>
<path d="M241.5 602 h5 M242.5 600 h3" stroke="#ffffff" stroke-width="0.9"/>
<line x1="410" y1="416.5" x2="410" y2="431" stroke="#ff0000" stroke-width="2.25" />
<line x1="423" y1="416.5" x2="423" y2="431" stroke="#ff0000" stroke-width="2.25" />
<line x1="410" y1="431" x2="424" y2="431" stroke="#00ff00" stroke-width="2" />
<line x1="409" y1="431" x2="409" y2="515" stroke="#00ff00" stroke-width="1.75" />
<line x1="424" y1="431" x2="424" y2="515" stroke="#00ff00" stroke-width="1.75" />
<line x1="421.5" y1="431" x2="421.5" y2="510" stroke="#00ff00" stroke-width="1" />
<line x1="408.8" y1="455" x2="408.8" y2="514" stroke="#00ff00" stroke-width="3" />
<line x1="379.4" y1="455" x2="453.6" y2="455" stroke="#00ff00" stroke-width="1.75" />
<line x1="383" y1="458" x2="409" y2="458" stroke="#00ff00" stroke-width="1.5" />
<line x1="424" y1="458" x2="449" y2="458" stroke="#00ff00" stroke-width="1.5" />
<line x1="379" y1="454.9" x2="379" y2="589" stroke="#00ff00" stroke-width="1.75" />
<line x1="383" y1="454.9" x2="383" y2="589" stroke="#00ff00" stroke-width="1.75" />
<line x1="450" y1="454.9" x2="450" y2="589" stroke="#00ff00" stroke-width="1.75" />
<line x1="454" y1="454.9" x2="454" y2="565" stroke="#00ff00" stroke-width="1.75" />
<line x1="377" y1="461" x2="406.2" y2="461" stroke="#ff0000" stroke-width="2.0" />
<line x1="426.4" y1="461" x2="448.9" y2="461" stroke="#ff0000" stroke-width="2.0" />
<line x1="377" y1="468" x2="406.2" y2="468" stroke="#ff0000" stroke-width="2.0" />
<line x1="426.4" y1="468" x2="448.9" y2="468" stroke="#ff0000" stroke-width="2.0" />
<line x1="377" y1="475" x2="406.2" y2="475" stroke="#ff0000" stroke-width="2.0" />
<line x1="426.4" y1="475" x2="448.9" y2="475" stroke="#ff0000" stroke-width="2.0" />
<line x1="378" y1="460" x2="378" y2="481" stroke="#ff0000" stroke-width="2.0" />
<line x1="406" y1="460" x2="406" y2="481" stroke="#ff0000" stroke-width="2.0" />
<line x1="426" y1="460" x2="426" y2="481" stroke="#ff0000" stroke-width="2.0" />
<line x1="434" y1="460" x2="434" y2="481" stroke="#ff0000" stroke-width="2.0" />
<line x1="452" y1="460" x2="452" y2="481" stroke="#ff0000" stroke-width="2.0" />
<line x1="327.6" y1="481.5" x2="458" y2="481.5" stroke="#cfcfcf" stroke-width="1" />
<line x1="383" y1="485" x2="449" y2="485" stroke="#00ff00" stroke-width="1.625" />
<line x1="408" y1="489" x2="424" y2="489" stroke="#00ff00" stroke-width="1.5" />
<line x1="327.6" y1="454.5" x2="379" y2="454.5" stroke="#cfcfcf" stroke-width="1" />
<line x1="339" y1="481.5" x2="339" y2="481.5" stroke="#cfcfcf" stroke-width="1" />
<line x1="349.7" y1="510.5" x2="382" y2="510.5" stroke="#cfcfcf" stroke-width="1" />
<line x1="383" y1="510" x2="449" y2="510" stroke="#00ff00" stroke-width="1.625" />
<line x1="383" y1="514" x2="449" y2="514" stroke="#00ff00" stroke-width="1.625" />
<line x1="360.8" y1="540.5" x2="382" y2="540.5" stroke="#cfcfcf" stroke-width="1" />
<line x1="383" y1="540" x2="449" y2="540" stroke="#00ff00" stroke-width="1.625" />
<line x1="383" y1="544" x2="449" y2="544" stroke="#00ff00" stroke-width="1.625" />
<line x1="327.5" y1="454" x2="327.5" y2="589.7" stroke="#cfcfcf" stroke-width="1" />
<line x1="325.6" y1="521.85" x2="329.6" y2="521.85" stroke="#cfcfcf" stroke-width="1" stroke-dasharray="2 0.7 1 0.6 3 1" opacity="0.8"/>
<line x1="339.5" y1="481.6" x2="339.5" y2="589.7" stroke="#cfcfcf" stroke-width="1" />
<line x1="337" y1="535.6500000000001" x2="341" y2="535.6500000000001" stroke="#cfcfcf" stroke-width="1" stroke-dasharray="2 0.7 1 0.6 3 1" opacity="0.8"/>
<line x1="349.5" y1="510.7" x2="349.5" y2="589.7" stroke="#cfcfcf" stroke-width="1" />
<line x1="347.7" y1="550.2" x2="351.7" y2="550.2" stroke="#cfcfcf" stroke-width="1" stroke-dasharray="2 0.7 1 0.6 3 1" opacity="0.8"/>
<line x1="360.5" y1="540.3" x2="360.5" y2="589.7" stroke="#cfcfcf" stroke-width="1" />
<line x1="358.8" y1="565.0" x2="362.8" y2="565.0" stroke="#cfcfcf" stroke-width="1" stroke-dasharray="2 0.7 1 0.6 3 1" opacity="0.8"/>
<line x1="327.6" y1="589.5" x2="380" y2="589.5" stroke="#cfcfcf" stroke-width="1" />
<rect x="377" y="588" width="7" height="3" fill="#00ff00"/>
<rect x="447" y="588" width="7" height="3" fill="#00ff00"/>
<line x1="378" y1="565" x2="378" y2="590" stroke="#ff0000" stroke-width="2" />
<rect x="421" y="477" width="4" height="6" fill="#0000ff"/>
<line x1="383.2" y1="557.7" x2="420" y2="487" stroke="#ff0000" stroke-width="2.25" />
<line x1="384" y1="568" x2="423" y2="491.6" stroke="#ff0000" stroke-width="2.25" />
<line x1="382.4" y1="578.2" x2="429.3" y2="486.5" stroke="#0000ff" stroke-width="1.875" />
<line x1="383.2" y1="590" x2="436.2" y2="486.5" stroke="#0000ff" stroke-width="1.875" />
<line x1="419" y1="489" x2="419" y2="508" stroke="#ff0000" stroke-width="2.0" />
<line x1="405" y1="515" x2="405" y2="532" stroke="#ff0000" stroke-width="2.0" />
<line x1="392" y1="545" x2="392" y2="559" stroke="#ff0000" stroke-width="2.0" />
<line x1="380" y1="595.5" x2="453" y2="595.5" stroke="#cfcfcf" stroke-width="1" />
<line x1="380.5" y1="592" x2="380.5" y2="598" stroke="#cfcfcf" stroke-width="1" />
<line x1="453.5" y1="592" x2="453.5" y2="598" stroke="#cfcfcf" stroke-width="1" />
<line x1="402" y1="609" x2="421" y2="609" stroke="#ffffff" stroke-width="1.6" />
<line x1="385" y1="611.5" x2="448" y2="611.5" stroke="#cfcfcf" stroke-width="1" />
<circle cx="443" cy="611.5" r="4.3" fill="none" stroke="#ffffff" stroke-width="1.2"/>
<path d="M440.5 611.5 h5 M441.5 609.5 h3" stroke="#ffffff" stroke-width="0.9"/>
<line x1="645" y1="562.5" x2="651" y2="562.5" stroke="#cfcfcf" stroke-width="0.9" stroke-dasharray="2 0.7 1 0.6 3 1" opacity="0.8"/>
<line x1="651" y1="568.2" x2="704" y2="568.2" stroke="#cfcfcf" stroke-width="1.1" stroke-dasharray="2 0.7 1 0.6 3 1" opacity="0.75"/>
<line x1="651" y1="573.4" x2="703" y2="573.4" stroke="#cfcfcf" stroke-width="1.1" stroke-dasharray="2 0.7 1 0.6 3 1" opacity="0.75"/>
<line x1="651" y1="579" x2="702" y2="579" stroke="#cfcfcf" stroke-width="1.1" stroke-dasharray="2 0.7 1 0.6 3 1" opacity="0.75"/>
<line x1="656" y1="582" x2="707" y2="582" stroke="#cfcfcf" stroke-width="1.1" stroke-dasharray="2 0.7 1 0.6 3 1" opacity="0.75"/>
<line x1="655" y1="585" x2="682" y2="585" stroke="#cfcfcf" stroke-width="1.1" stroke-dasharray="2 0.7 1 0.6 3 1" opacity="0.75"/>
<line x1="651" y1="590" x2="705" y2="590" stroke="#cfcfcf" stroke-width="1.1" stroke-dasharray="2 0.7 1 0.6 3 1" opacity="0.75"/>
<line x1="654" y1="592.5" x2="674" y2="592.5" stroke="#cfcfcf" stroke-width="1.1" stroke-dasharray="2 0.7 1 0.6 3 1" opacity="0.75"/>
<line x1="651" y1="597" x2="706" y2="597" stroke="#cfcfcf" stroke-width="1.1" stroke-dasharray="2 0.7 1 0.6 3 1" opacity="0.75"/>
<line x1="654" y1="599" x2="701" y2="599" stroke="#cfcfcf" stroke-width="1.1" stroke-dasharray="2 0.7 1 0.6 3 1" opacity="0.75"/>
<line x1="655" y1="602" x2="682" y2="602" stroke="#cfcfcf" stroke-width="1.1" stroke-dasharray="2 0.7 1 0.6 3 1" opacity="0.75"/>
<line x1="650" y1="612.5" x2="680" y2="612.5" stroke="#cfcfcf" stroke-width="1.1" stroke-dasharray="2 0.7 1 0.6 3 1" opacity="0.75"/>
<line x1="653" y1="617" x2="711" y2="617" stroke="#cfcfcf" stroke-width="1.1" stroke-dasharray="2 0.7 1 0.6 3 1" opacity="0.75"/>
<rect x="639" y="639" width="109" height="37" fill="#ffffff"/>
<rect x="641" y="641.5" width="34" height="1.8" fill="#000"/>
<rect x="641" y="646" width="22" height="2.2" fill="#000"/>
<rect x="665" y="646" width="9" height="2.2" fill="#000"/>
<rect x="641" y="651" width="22" height="2.2" fill="#000"/>
<rect x="665" y="651" width="9" height="2.2" fill="#000"/>
<rect x="641" y="656.3" width="22" height="2.8" fill="#000"/>
<rect x="665" y="656.3" width="9" height="2.8" fill="#000"/>
<rect x="641" y="662" width="22" height="2" fill="#000"/>
<rect x="665" y="662" width="9" height="2" fill="#000"/>
<rect x="641" y="667.2" width="22" height="2" fill="#000"/>
<rect x="665" y="667.2" width="9" height="2" fill="#000"/>
<rect x="641" y="672" width="22" height="2" fill="#000"/>
<rect x="665" y="672" width="9" height="2" fill="#000"/>
<rect x="677" y="641.3" width="69" height="4.4" fill="#000"/>
<rect x="677" y="649.4" width="69" height="12.2" fill="#000"/>
<rect x="684" y="665" width="14" height="4" fill="#000"/>
<rect x="700" y="665" width="40" height="4" fill="#000"/>
<rect x="743" y="665" width="3" height="4" fill="#000"/>
<rect x="690" y="672" width="56" height="1.5" fill="#000"/>
<line x1="690" y1="644" x2="735" y2="644" stroke="#cfcfcf" stroke-width="1" stroke-dasharray="2 0.7 1 0.6 3 1" opacity="0.8"/>
<line x1="686" y1="651.5" x2="740" y2="651.5" stroke="#cfcfcf" stroke-width="1" stroke-dasharray="2 0.7 1 0.6 3 1" opacity="0.8"/>
<line x1="703" y1="667" x2="735" y2="667" stroke="#cfcfcf" stroke-width="1.3" stroke-dasharray="2 0.7 1 0.6 3 1" opacity="0.9"/>
<path d="M656 700 V689.5 H756 V700" stroke="#ffffff" stroke-width="1.4" fill="none" />
<rect x="657" y="690.5" width="98" height="9.5" fill="#000"/>
<line x1="659" y1="692.5" x2="730" y2="692.5" stroke="#ffffff" stroke-width="2" stroke-dasharray="2 0.7 1 0.6 3 1" opacity="1"/>
<line x1="659" y1="697.5" x2="738" y2="697.5" stroke="#ffffff" stroke-width="2" stroke-dasharray="2 0.7 1 0.6 3 1" opacity="1"/></svg><!--/DRAW-->
<!-- status bar -->
<div class="a" style="left:1px;top:733px;width:1022px;height:26px;background:#f0f0f0"></div>
<div class="a" style="left:2px;top:735px;width:25px;height:1px;background:#a0a0a0"></div><div class="a" style="left:27px;top:735px;width:1px;height:23px;background:#fff"></div>
<div class="a" style="left:4px;top:740px;font-size:11.2px;letter-spacing:-0.25px;color:#000;white-space:nowrap">Element Selection &gt; Identify element to add to set</div>
<div class="a" style="left:392px;top:735px;width:1px;height:23px;background:#fff"></div>
<div class="a" style="left:394px;top:740px;width:2px;height:2px;background:#8a8a8a"></div>
<div class="a" style="left:394px;top:744px;width:2px;height:2px;background:#8a8a8a"></div>
<div class="a" style="left:394px;top:748px;width:2px;height:2px;background:#8a8a8a"></div>
<div class="a" style="left:394px;top:752px;width:2px;height:2px;background:#8a8a8a"></div>
<div class="sp" style="left:399px;width:28px"></div>
<div class="sp" style="left:523px;width:27px"></div>
<div class="sp" style="left:551px;width:27px"></div>
<div class="sp" style="left:579px;width:114px"></div>
<div class="sp" style="left:695px;width:103px"></div>
<div class="sp" style="left:799px;width:27px"></div>
<div class="sp" style="left:827px;width:27px"></div>
<div class="sp" style="left:855px;width:26px"></div>
<div class="sp" style="left:883px;width:26px"></div>
<div class="sp" style="left:911px;width:26px"></div>
<div class="sp" style="left:939px;width:26px"></div>
<div class="sp" style="left:967px;width:26px"></div>
<div class="sp" style="left:995px;width:26px"></div>

<svg class="a" style="left:418px;top:736px" width="9" height="6"><path d="M1 5 L4.5 1.5 L8 5Z" fill="#000"/></svg>
<div class="a" style="left:581px;top:739.5px;font-size:11.6px;letter-spacing:-0.6px;color:#000;white-space:nowrap">GeneralAnnotations</div>
<svg class="a" style="left:520px;top:733px" width="504" height="26" viewBox="520 733 504 26">
<!-- line string icon -->
<path d="M530 748 L535 748 L539 740" fill="none" stroke="#4a6a8a" stroke-width="1"/>
<circle cx="529.5" cy="748" r="1.6" fill="#fff" stroke="#3070e0" stroke-width="1.1"/><circle cx="535.5" cy="748" r="1.6" fill="#fff" stroke="#3070e0" stroke-width="1.1"/><circle cx="539.5" cy="740" r="1.6" fill="#fff" stroke="#3070e0" stroke-width="1.1"/>
<!-- lock -->
<path d="M560.5 745 v-3 q0 -3 3 -3 q3 0 3 3 v3" fill="none" stroke="#808070" stroke-width="1.2"/>
<rect x="558.5" y="744.5" width="10" height="6" fill="#c8c020" stroke="#6a6a20" stroke-width="1"/>
<!-- blue snap icon -->
<path d="M833.5 740.5 h13 v9 l-4 4 h-9Z" fill="#2a8ae8" stroke="#1a5ab0" stroke-width="1"/>
<path d="M840 742 v10 M836 745.5 h8" stroke="#dff" stroke-width="1"/><circle cx="840" cy="745.5" r="1.5" fill="#fff"/>
<!-- no sign icon -->
<rect x="861" y="740" width="13" height="12" fill="#707070"/><rect x="863" y="744" width="9" height="4" fill="#e8e8e8"/>
<circle cx="868" cy="746" r="6" fill="none" stroke="#e01010" stroke-width="2"/><path d="M864 742 L872 750" stroke="#e01010" stroke-width="2"/>
<!-- scroll -->
<path d="M890 741 h10 q2 0 2 2 l-3 8 h-10 q-2 0 -2 -2Z" fill="#eef0f6" stroke="#a0a6b8" stroke-width="1"/>
<!-- hand -->
<path d="M919 741 q2 -2 3 0 l1 3 l1 -2 q2 0 1 3 l1 5 q-1 4 -5 4 q-3 -2 -3 -6 q-1 -3 0 -4Z" fill="#b8b8b8" stroke="#808080" stroke-width="0.8"/>
<!-- cube -->
<path d="M972 740 l12 -1 l-1 13 l-11 -1Z" fill="#f4f4f4" stroke="#a8a8a8" stroke-width="1"/><rect x="975" y="743" width="6" height="6" fill="none" stroke="#a0a0a0" stroke-width="1"/>
<!-- circle slash -->
<rect x="999" y="738" width="16" height="16" fill="#a8a8a8"/><circle cx="1007" cy="746" r="5.5" fill="#c8c8c8" stroke="#111" stroke-width="1.2"/><path d="M1003 742 L1011 750" stroke="#111" stroke-width="1.2"/>
</svg>

<!-- Element dialog -->
<div class="a" style="left:743px;top:161px;width:224px;height:373px;background:#f0f0f0;border:1px solid #1a9a9a"></div>
<div class="a" style="left:744px;top:162px;width:222px;height:25px;background:#fff"></div>
<svg class="a" style="left:747px;top:165px" width="14" height="18" viewBox="0 0 14 18">
<path d="M3 2 Q1 5 2 9 L4 15 Q6 17 9 16 L12 13 L11 11 L10 8 Q11 5 9 3 L8 6 L6 6 Q5 3 7 1 Q5 1 3 2Z" fill="#c0c0c0" stroke="#8a8a8a" stroke-width="0.8"/>
<path d="M5 9 L8 14" stroke="#e8e8f0" stroke-width="1.2"/>
</svg>
<div class="a" style="left:767px;top:167px;font-size:12px;letter-spacing:-0.05px;color:#1a1a1a;white-space:nowrap">Element ...</div>
<div class="a" style="left:847px;top:174px;width:10px;height:1px;background:#1a1a1a"></div>
<div class="a" style="left:892px;top:169px;width:10px;height:10px;border:1px solid #c8c8c8"></div>
<svg class="a" style="left:936px;top:167px" width="14" height="14"><path d="M2 2 L12 12 M12 2 L2 12" stroke="#1a1a1a" stroke-width="1.1"/></svg>

<!-- groups -->
<div class="a" style="left:765px;top:194px;width:110px;height:25px;border-top:1px solid #a0a0a0;border-left:1px solid #a0a0a0;border-right:1px solid #fff;border-bottom:1px solid #fff"></div>
<div class="a" style="left:765px;top:221px;width:110px;height:25px;border-top:1px solid #a0a0a0;border-left:1px solid #a0a0a0;border-right:1px solid #fff;border-bottom:1px solid #fff"></div>
<svg class="a" style="left:743px;top:187px" width="224" height="70" viewBox="743 187 224 70">
<defs>
<linearGradient id="selg2" x1="0" y1="0" x2="0" y2="1"><stop offset="0" stop-color="#f8c088"/><stop offset="0.5" stop-color="#f6b060"/><stop offset="1" stop-color="#fde89a"/></linearGradient>
</defs>
<rect x="768.5" y="197.5" width="19" height="19" fill="url(#selg2)" stroke="#3f87dc" stroke-width="1"/>
<path d="M778 200 v14 M771 207 h14" stroke="#2a7ae8" stroke-width="1.4"/>
<circle cx="778" cy="207" r="3.5" fill="#3a8af0" stroke="#1a5ad0" stroke-width="0.8"/><path d="M776 207h4M778 205v4" stroke="#cde" stroke-width="0.6"/>
<rect x="794" y="202.5" width="11" height="9" rx="1.5" fill="#f4f4ff" stroke="#3a90f0" stroke-width="1.4"/>
<path d="M814 203.5 L826 203.5 L823 210.5 L811 210.5Z" fill="#f4f4ff" stroke="#3a90f0" stroke-width="1.4"/>
<circle cx="841" cy="206.5" r="5.3" fill="#f4f4ff" stroke="#3a90f0" stroke-width="1.4"/>
<path d="M857 212 L867 202" stroke="#6a7ab0" stroke-width="1"/>
<rect x="768.5" y="224.5" width="19" height="19" fill="url(#selg2)" stroke="#3f87dc" stroke-width="1"/>
<path d="M775 228 L777 231 M772 232 h4 M773.5 236 l2.5 -2 M778 227 v4 M781 228 l-2 3" stroke="#3aa0f0" stroke-width="1"/>
<path d="M778 233 L778 241 L780 239.5 L782 242 L783 241 L781.5 238.5 L784 238Z" fill="#fff" stroke="#5a7ab0" stroke-width="0.6"/>
<path d="M799 228 v11 M793.5 233.5 h11" stroke="#3a90f0" stroke-width="3.2" stroke-linecap="round"/>
<path d="M799 228 v11 M793.5 233.5 h11" stroke="#f4f4ff" stroke-width="1.2" stroke-linecap="round"/>
<path d="M814 233.5 h11" stroke="#3a90f0" stroke-width="3.2" stroke-linecap="round"/><path d="M814 233.5 h11" stroke="#f4f4ff" stroke-width="1.2"/>
<rect x="835.5" y="228.5" width="11" height="11" rx="1" fill="#0a5af0" stroke="#2a80f0" stroke-width="1"/>
<path d="M836 229 L846 229 L836 239Z" fill="#fff"/>
<circle cx="862" cy="233" r="6" fill="#1a5aa8"/><path d="M858 230 q3 -3 6 0 q1 4 -3 5Z" fill="#40a040"/><path d="M861 229 L861 240 L863 238 L865 241 L866 240 L864 237.5 L866.5 237Z" fill="#fff" stroke="#4a6a9a" stroke-width="0.5"/>
<!-- right icons -->
<circle cx="902.2" cy="208" r="8.7" fill="none" stroke="#e88c8c" stroke-width="2"/>
<rect x="897.5" y="203.5" width="10" height="10" fill="#6a7ad0" stroke="#2a80f8" stroke-width="1.2"/>
<path d="M898 204 L907 213" stroke="#a06080" stroke-width="1"/>
<rect x="894" y="225" width="14.5" height="15" fill="#d0d0d0" stroke="#b8b8b8" stroke-width="1"/>
<path d="M899 231 L899 246 L902 243 L905 248 L906.5 247 L904 242 L908 241.5Z" fill="#808080"/>
<path d="M930 244.3 L938.3 244.3 L934.15 239Z" fill="#000"/>
</svg>

<!-- tabs -->
<div class="a" style="left:765px;top:257px;width:180px;height:242px;border-top:1px solid #dadada;border-left:1px solid #dadada;border-right:1px solid #a8a8a8"></div>
<div class="a" style="left:824px;top:258px;width:1px;height:19px;background:#dadada"></div>
<div class="a" style="left:884px;top:258px;width:1px;height:19px;background:#dadada"></div>
<div class="a" style="left:759px;top:277px;width:180px;height:242px;border-top:1px solid #dadada;border-left:1px solid #dadada;border-right:1px solid #a0a0a0;border-bottom:1px solid #a0a0a0;background:#f0f0f0"></div>
<div class="a" style="left:760px;top:278px;width:44px;height:19px;background:#fff"></div>
<div class="a" style="left:804px;top:278px;width:1px;height:19px;background:#dadada"></div>
<div class="a" style="left:848px;top:278px;width:1px;height:19px;background:#dadada"></div>
<div class="a" style="left:893px;top:278px;width:1px;height:19px;background:#dadada"></div>
<svg class="a" style="left:765px;top:257px" width="180" height="20" viewBox="765 257 180 20"><!-- tab icons -->
<path d="M788 268 L796 259 M789 272 L793 268" stroke="#555" stroke-width="1.3"/>
<circle cx="797.5" cy="270.5" r="2.2" fill="none" stroke="#555" stroke-width="1.2"/>
<path d="M847 259 v12 M851 259 v10 M855 259 v12" stroke="#666" stroke-width="1" stroke-dasharray="1.2 1"/>
<path d="M847 271 q2 2 4 0 q2 2 4 0" fill="none" stroke="#444" stroke-width="1.3"/>
<path d="M907 268 L910 262 L920 261 L918 268 L922 271 L911 273Z" fill="#2a80f0" stroke="#1a5ac0" stroke-width="0.8"/>
<path d="M911 266 q3 -4 6 -1 v2 h-6Z" fill="#111"/>
</svg>
<svg class="a" style="left:759px;top:277px" width="180" height="22" viewBox="759 277 180 22">
<defs><linearGradient id="hue" x1="0" y1="0" x2="1" y2="1"><stop offset="0" stop-color="#ff40ff"/><stop offset="0.3" stop-color="#ffe060"/><stop offset="0.6" stop-color="#60ff80"/><stop offset="1" stop-color="#40c0ff"/></linearGradient></defs>
<path d="M774 283 q7 -3 13 0 v8 q-6 3 -13 0Z" fill="#d8d4cc" stroke="#8a8278" stroke-width="0.9"/>
<path d="M774 286 q7 3 13 0 M774 289 q7 3 13 0" fill="none" stroke="#8a8278" stroke-width="0.9"/>
<rect x="817.5" y="279.5" width="15" height="15" rx="1.5" fill="url(#hue)" stroke="#3a7ae8" stroke-width="1.4"/>
<path d="M863 281 h12 M863 285 h3 M868 285 h7 M863 289 h2 M867 289 h2 M871 289 h2 M874 289 h1 M863 292 h12" stroke="#555" stroke-width="1" />
<path d="M909 281 h12" stroke="#8a7a60" stroke-width="1"/><path d="M909 285 h12" stroke="#444" stroke-width="1.5"/><path d="M909 289 h12" stroke="#222" stroke-width="2"/><path d="M909 293 h12" stroke="#000" stroke-width="2.5"/>
</svg>

<!-- list -->
<div class="a" style="left:766px;top:304px;width:168px;height:207px;background:#fff;border:1px solid #828790"></div>
<div class="a" style="left:767px;top:305px;width:148px;height:21px;background:#fff"></div>
<div class="a" style="left:886px;top:306px;width:1px;height:20px;background:#e4e4e4"></div>
<svg class="a" style="left:898px;top:306px" width="12" height="8"><path d="M2 2 L6 6 L10 2" fill="none" stroke="#a0a0a0" stroke-width="1"/></svg>
<div class="a" style="left:767px;top:326px;width:148px;height:2px;background:#7a7a7a"></div>
<div class="a" style="left:772px;top:308px;font-size:12px;letter-spacing:-0.2px;color:#1a1a1a;white-space:nowrap">Level</div>
<div class="a" style="left:915px;top:305px;width:18px;height:205px;background:#f0f0f0"></div>
<div class="a" style="left:916px;top:323px;width:15px;height:119px;background:#cdcdcd"></div>
<svg class="a" style="left:915px;top:305px" width="18" height="205"><path d="M4 12 L8.5 7.5 L13 12" fill="none" stroke="#606060" stroke-width="1.6"/><path d="M4 193 L8.5 197.5 L13 193" fill="none" stroke="#606060" stroke-width="1.6"/></svg>
<div class="a" style="left:771px;top:328.5px;font-size:11.6px;letter-spacing:-0.55px;line-height:15px;color:#1a1a1a;white-space:nowrap">0<br>0 (Construction)<br>Border<br>BorderPlot<br>ClipShape<br>ClipShape (Construction)<br>ClipVolumes<br>Defpoints<br>e-border - TitleBlock T<br>GeneralAnnotations<br>GeneralDimensions<br>HandRails</div>

<div class="a" style="left:661px;top:207px;font-size:31px;font-weight:bold;letter-spacing:-1px;color:#454545;mix-blend-mode:screen;white-space:nowrap">SOFTPEDIA<span style="font-size:9px;vertical-align:top;position:relative;top:6px;left:2px">&reg;</span></div>
</body></html>
